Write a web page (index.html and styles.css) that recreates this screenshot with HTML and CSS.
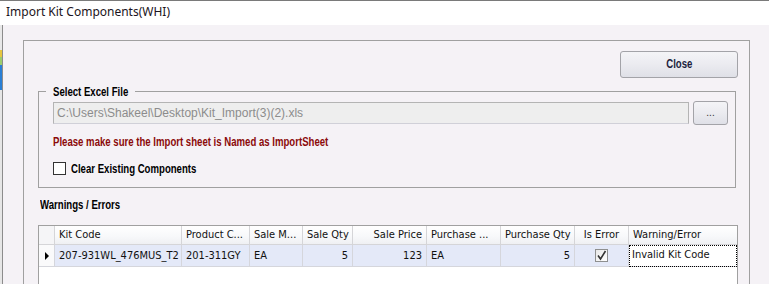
FILE: index.html
```html
<!DOCTYPE html>
<html>
<head>
<meta charset="utf-8">
<title>Import Kit Components(WHI)</title>
<link rel="stylesheet" href="styles.css">
</head>
<body>
<div class="window">
  <div class="titlebar">Import Kit Components(WHI)</div>
  <div class="client">
    <div class="edge"></div>
    <div class="content">
      <div class="panel">
        <div class="top-row">
          <button class="btn btn-close"><span class="narrow mid">Close</span></button>
        </div>
        <fieldset class="group">
          <legend class="group-title"><span class="narrow">Select Excel File</span></legend>
          <div class="file-row">
            <div class="file-input">C:\Users\Shakeel\Desktop\Kit_Import(3)(2).xls</div>
            <button class="btn btn-browse">...</button>
          </div>
          <div class="note"><span class="narrow">Please make sure the Import sheet is Named as ImportSheet</span></div>
          <label class="check-row"><span class="checkbox"></span><span class="check-label"><span class="narrow">Clear Existing Components</span></span></label>
        </fieldset>
        <div class="section-title"><span class="narrow">Warnings / Errors</span></div>
        <div class="grid">
          <div class="hcell rowhead"></div>
          <div class="hcell">Kit Code</div>
          <div class="hcell">Product C...</div>
          <div class="hcell">Sale M...</div>
          <div class="hcell right">Sale Qty</div>
          <div class="hcell right">Sale Price</div>
          <div class="hcell">Purchase ...</div>
          <div class="hcell right">Purchase Qty</div>
          <div class="hcell center">Is Error</div>
          <div class="hcell last">Warning/Error</div>

          <div class="cell rowhead"><span class="arrow"></span></div>
          <div class="cell">207-931WL_476MUS_T2</div>
          <div class="cell">201-311GY</div>
          <div class="cell">EA</div>
          <div class="cell right">5</div>
          <div class="cell right">123</div>
          <div class="cell">EA</div>
          <div class="cell right">5</div>
          <div class="cell center"><span class="cb-checked"><svg width="11" height="11" viewBox="0 0 11 11"><path d="M2 5.5 L4.5 9 L9.5 1" fill="none" stroke="#333" stroke-width="1.6"/></svg></span></div>
          <div class="cell last focus">Invalid Kit Code</div>
        </div>
      </div>
    </div>
  </div>
</div>
</body>
</html>
```

FILE: styles.css
```css
* { box-sizing: border-box; }
html, body { margin: 0; padding: 0; }
body {
  width: 769px;
  height: 284px;
  overflow: hidden;
  background: #f5f2f6;
  font-family: "Liberation Sans", Arial, sans-serif;
}
.window {
  width: 769px;
  height: 284px;
  display: flex;
  flex-direction: column;
  overflow: hidden;
}
.titlebar {
  height: 25px;
  flex: none;
  background: #ffffff;
  border-top: 1px solid #7a7a7a;
  padding-left: 6px;
  font-family: "Segoe UI", "Noto Sans", sans-serif;
  font-size: 12px;
  line-height: 22px;
  color: #1b1421;
}
.client {
  flex: 1;
  display: flex;
  background: #f5f2f6;
}
.edge {
  width: 3px;
  background: linear-gradient(to bottom, #e8e8e8 0, #e8e8e8 25px, #e6c640 25px, #e6c640 32px, #9ccc6c 32px, #9ccc6c 40px, #2a7fd4 40px, #2a7fd4 65px, #e6e6e6 65px);
  border-right: 1px solid #8c8c8c;
}
.content {
  flex: 1;
  padding: 15px 0 0 20px;
}
.panel {
  width: 727px;
  height: 300px;
  border: 1px solid #a0a0a0;
  border-bottom: none;
}
.narrow {
  display: inline-block;
  font-family: "Liberation Sans", Arial, sans-serif;
  font-weight: bold;
  font-size: 12px;
  white-space: nowrap;
  transform: scaleX(0.8);
  transform-origin: 0 50%;
}
.narrow.mid { transform-origin: 50% 50%; }
.top-row {
  display: flex;
  justify-content: flex-end;
  padding: 10px 11px 0 0;
}
.btn {
  border: 1px solid #a3a3a8;
  border-radius: 3px;
  background: linear-gradient(to bottom, #f4f4f7 0%, #ebebf0 50%, #dfe0e7 100%);
  font-family: "Liberation Sans", Arial, sans-serif;
  font-size: 12px;
  color: #1c1f3e;
  padding: 0;
}
.btn-close {
  width: 118px;
  height: 27px;
  line-height: 25px;
}
.group {
  margin: 6px 13px 0 14px;
  padding: 0 7px 12px 14px;
  border: 1px solid #a0a0a0;
  height: 104px;
}
.group-title {
  margin-left: -7px;
  padding: 0 7px;
  width: 89px;
  line-height: 14px;
  color: #000;
  white-space: nowrap;
}
.file-row {
  display: flex;
  align-items: center;
  gap: 4px;
  margin-top: 2px;
}
.file-input {
  width: 636px;
  height: 22px;
  background: #eeeeee;
  border: 1px solid #b4b4b4;
  border-bottom-color: #d0d0d8;
  font-size: 12px;
  line-height: 20px;
  padding-left: 3px;
  color: #8c8c8c;
  white-space: nowrap;
}
.btn-browse {
  width: 35px;
  height: 24px;
  font-size: 10px;
  line-height: 18px;
  color: #333;
}
.note {
  margin-top: 9px;
  line-height: 14px;
  height: 14px;
  color: #8b0a0a;
}
.check-row {
  display: flex;
  align-items: center;
  margin-top: 13px;
  gap: 5px;
}
.checkbox {
  width: 13px;
  height: 13px;
  border: 1px solid #333;
  background: #fff;
}
.check-label {
  line-height: 14px;
  color: #000;
}
.section-title {
  margin: 9px 0 0 16px;
  line-height: 14px;
  height: 14px;
  color: #000;
}
.grid {
  margin: 14px 0 0 14px;
  width: 700px;
  height: 120px;
  border: 1px solid #a0a0a0;
  border-bottom: none;
  background: #fff;
  display: grid;
  grid-template-columns: 16px 127px 68px 53px 50px 74px 74px 74px 54px 1fr;
  grid-template-rows: 19px 22px;
  align-content: start;
  font-family: "DejaVu Sans Condensed", "DejaVu Sans", sans-serif;
  font-size: 11px;
  color: #111;
}
.hcell {
  background: linear-gradient(to bottom, #ffffff 0%, #f7f8fa 60%, #eff0f3 100%);
  border-right: 1px solid #d5d5d8;
  border-bottom: 1px solid #d5d5d8;
  padding: 0 4px;
  line-height: 18px;
  white-space: nowrap;
  overflow: hidden;
}
.cell {
  background: #e4e9f8;
  border-right: 1px solid #d5d6dc;
  border-bottom: 1px solid #d5d6dc;
  padding: 0 4px;
  line-height: 21px;
  white-space: nowrap;
  overflow: hidden;
}
.rowhead {
  background: #f5f5f7;
  padding: 0;
}
.cell.rowhead {
  background: #fafafb;
  display: flex;
  align-items: center;
  justify-content: center;
}
.arrow {
  width: 0;
  height: 0;
  border-top: 4px solid transparent;
  border-bottom: 4px solid transparent;
  border-left: 4px solid #000;
}
.right { text-align: right; }
.center { text-align: center; }
.last { border-right: none; }
.cell.center {
  display: flex;
  align-items: center;
  justify-content: center;
}
.cb-checked {
  width: 13px;
  height: 13px;
  border: 1px solid #8e8f8f;
  background: linear-gradient(to bottom right, #e8e8e8, #ffffff);
  display: flex;
  align-items: center;
  justify-content: center;
}
.cb-checked svg { display: block; }
.cell.focus {
  background: #ffffff;
  outline: 1px dotted #000;
  outline-offset: -1px;
  line-height: 19px;
  padding-left: 3px;
}
```
